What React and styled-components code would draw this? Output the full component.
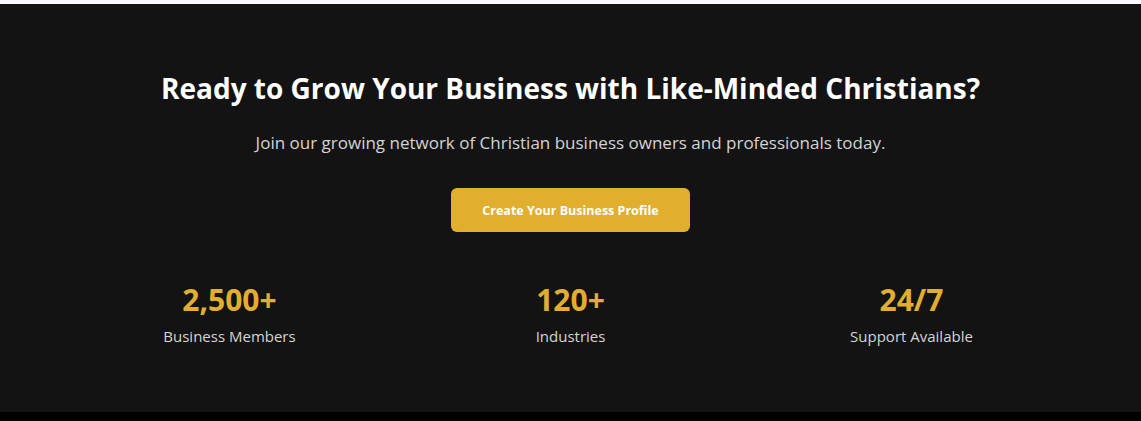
import React from 'react'
import styled, { createGlobalStyle } from 'styled-components'

const Global = createGlobalStyle`
    html, body {
        margin: 0;
        padding: 0;
        background: #000;
    }
    body {
        font-family: "Open Sans", "Noto Sans", sans-serif;
    }
`

const TopStrip = styled.div`
    height: 4px;
    background-color: #f8f9fc;
`

const Section = styled.section`
    background-color: #131313;
    padding: 67px 16px 64px;
    text-align: center;
    color: #fff;
`

const Title = styled.h2`
    margin: 0 0 24px;
    font-size: 28px;
    line-height: 34px;
    font-weight: 700;
    color: #fff;
`

const Subtitle = styled.p`
    margin: 0 0 32px;
    font-size: 17px;
    line-height: 27px;
    color: #d4d4d4;
`

const Button = styled.button`
    width: 239px;
    height: 44px;
    border: none;
    border-radius: 6px;
    background-color: #e2ae2d;
    color: #fff;
    font-family: inherit;
    font-size: 12.5px;
    font-weight: 700;
    cursor: pointer;
`

const Stats = styled.div`
    margin: 51px auto 0;
    width: 1023px;
    display: grid;
    grid-template-columns: repeat(3, 1fr);
`

const Stat = styled.div`
    display: flex;
    flex-direction: column;
    align-items: center;
    gap: 7px;
`

const Number = styled.div`
    font-size: 30px;
    line-height: 34px;
    font-weight: 700;
    color: #e2ae2d;
`

const Label = styled.div`
    font-size: 15px;
    line-height: 24px;
    color: #d4d4d4;
`

const Footer = styled.div`
    height: 9px;
    background-color: #000;
`

const stats = [
    { value: '2,500+', label: 'Business Members' },
    { value: '120+', label: 'Industries' },
    { value: '24/7', label: 'Support Available' },
]

const App = () => {
    return (
        <>
            <Global />
            <TopStrip />
            <Section>
                <Title>Ready to Grow Your Business with Like-Minded Christians?</Title>
                <Subtitle>Join our growing network of Christian business owners and professionals today.</Subtitle>
                <Button>Create Your Business Profile</Button>
                <Stats>
                    {stats.map(s => (
                        <Stat key={s.label}>
                            <Number>{s.value}</Number>
                            <Label>{s.label}</Label>
                        </Stat>
                    ))}
                </Stats>
            </Section>
            <Footer />
        </>
    )
}

export default App
